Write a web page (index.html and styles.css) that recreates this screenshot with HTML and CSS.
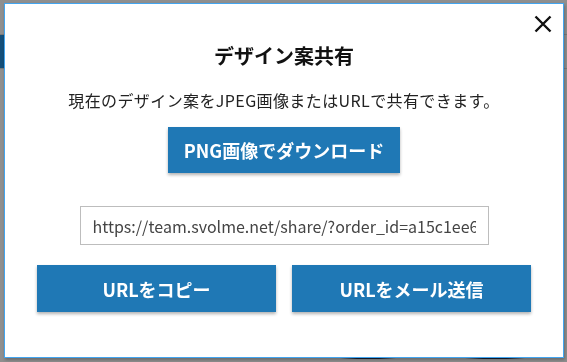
FILE: index.html
```html
<!DOCTYPE html>
<html lang="ja">
<head>
    <meta charset="UTF-8">
    <meta name="viewport" content="width=device-width, initial-scale=1.0">
    <title>デザイン案共有</title>
    <link rel="stylesheet" href="styles.css">
</head>
<body>

<!-- 背景のページ -->
<div class="page">
    <div class="page-header">
        <div class="page-logo"></div>
    </div>
    <div class="page-blob blob-1"></div>
    <div class="page-blob blob-2"></div>
</div>

<!-- 共有モーダル -->
<div class="overlay">
    <div class="modal">
        <button class="close-btn" aria-label="閉じる">
            <svg width="18" height="18" viewBox="0 0 18 18">
                <path d="M1.5 1.5 L16.5 16.5 M16.5 1.5 L1.5 16.5" stroke="#111" stroke-width="2.4" fill="none"/>
            </svg>
        </button>
        <h1 class="modal-title">デザイン案共有</h1>
        <p class="modal-desc">現在のデザイン案をJPEG画像またはURLで共有できます。</p>
        <button class="btn btn-download">PNG画像でダウンロード</button>
        <input class="share-url" type="text" value="https://team.svolme.net/share/?order_id=a15c1ee6b2f94d" readonly>
        <div class="btn-row">
            <button class="btn btn-wide">URLをコピー</button>
            <button class="btn btn-wide">URLをメール送信</button>
        </div>
    </div>
</div>

</body>
</html>
```

FILE: styles.css
```css
/* 全体 */
body {
    margin: 0;
    font-family: "Noto Sans CJK JP", "Noto Sans", sans-serif;
    background-color: #8f8f8f;
    height: 100vh;
    overflow: hidden;
}

/* 背景ページ（暗くなった状態） */
.page {
    height: 100%;
    padding-top: 34px;
    box-sizing: border-box;
}

.page-header {
    height: 33px;
    border-top: 1px solid #7a7a7a;
    border-bottom: 1px solid #7a7a7a;
    display: flex;
}

.page-logo {
    width: 60px;
    background-color: #144f7a;
}

/* モーダルの下から少し見える背景の影 */
.page-blob {
    position: absolute;
    top: 357px;
    height: 2px;
    background: linear-gradient(to right, rgba(20, 30, 50, 0), #141e32 30%, #141e32 70%, rgba(20, 30, 50, 0));
}

.blob-1 { left: 340px; width: 56px; }
.blob-2 { left: 465px; width: 60px; }

/* モーダル */
.overlay {
    position: fixed;
    inset: 0;
    padding: 3px 0 0 4px;
}

.modal {
    position: relative;
    width: 560px;
    height: 355px;
    box-sizing: border-box;
    background-color: #ffffff;
    border: 1px solid #42a5f0;
    box-shadow: 1px 2px 3px rgba(0, 0, 0, 0.25);
    display: flex;
    flex-direction: column;
    align-items: center;
    padding-top: 38px;
}

.close-btn {
    position: absolute;
    top: 11px;
    right: 11px;
    width: 18px;
    height: 18px;
    padding: 0;
    border: none;
    background: none;
    cursor: pointer;
    display: flex;
}

.modal-title {
    margin: 0;
    font-size: 20px;
    line-height: 28px;
    font-weight: bold;
    color: #111;
}

.modal-desc {
    margin: 18px 0 0;
    font-size: 16px;
    line-height: 24px;
    letter-spacing: 0.4px;
    color: #222;
}

.btn {
    font-family: inherit;
    font-weight: bold;
    font-size: 18px;
    color: #ffffff;
    background-color: #1f78b5;
    border: none;
    box-shadow: 0 2px 3px rgba(0, 0, 0, 0.3);
    cursor: pointer;
}

.btn:hover {
    background-color: #1a6aa0;
}

.btn-download {
    margin-top: 15px;
    width: 232px;
    height: 46px;
}

.share-url {
    margin-top: 33px;
    width: 409px;
    height: 39px;
    box-sizing: border-box;
    padding: 0 12px;
    border: 1px solid #bdbdbd;
    font-family: inherit;
    font-size: 16px;
    color: #444;
    outline: none;
}

.btn-row {
    margin-top: 20px;
    display: flex;
    gap: 16px;
}

.btn-wide {
    width: 239px;
    height: 47px;
}
```
